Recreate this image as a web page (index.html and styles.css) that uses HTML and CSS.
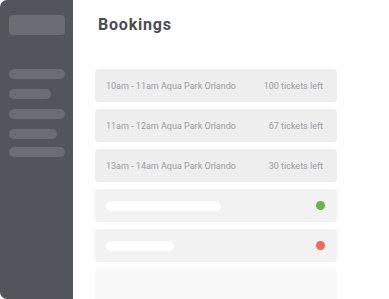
FILE: index.html
```html
<!DOCTYPE html>
<html>
<head>
<meta charset="utf-8">
<link rel="stylesheet" href="styles.css">
</head>
<body>
<div class="app">
  <aside class="sidebar">
    <div class="logo"></div>
    <div class="nav">
      <div class="nav-line w56"></div>
      <div class="nav-line w42"></div>
      <div class="nav-line w56"></div>
      <div class="nav-line w48"></div>
      <div class="nav-line w56 last"></div>
    </div>
  </aside>
  <main class="main">
    <h1 class="title">Bookings</h1>
    <div class="list">
      <div class="row"><span>10am - 11am Aqua Park Orlando</span><span>100 tickets left</span></div>
      <div class="row"><span>11am - 12am Aqua Park Orlando</span><span>67 tickets left</span></div>
      <div class="row"><span>13am - 14am Aqua Park Orlando</span><span>30 tickets left</span></div>
      <div class="row light"><div class="pill p-long"></div><div class="dot green"></div></div>
      <div class="row light"><div class="pill p-short"></div><div class="dot red"></div></div>
      <div class="row lighter"></div>
    </div>
  </main>
</div>
</body>
</html>
```
FILE: styles.css
```css
html, body {
  margin: 0;
  padding: 0;
  background: #ffffff;
  font-family: Roboto, "Liberation Sans", sans-serif;
}
.app {
  display: flex;
  width: 389px;
  height: 299px;
  overflow: hidden;
}
.sidebar {
  width: 73px;
  height: 299px;
  background: #54555c;
  border-radius: 7px 0 0 7px;
  padding: 15px 8px 0 9px;
  box-sizing: border-box;
  flex-shrink: 0;
}
.logo {
  width: 56px;
  height: 20px;
  background: #6b6c76;
  border-radius: 4px;
}
.nav {
  margin-top: 34px;
  display: flex;
  flex-direction: column;
  gap: 10px;
}
.nav-line {
  height: 10px;
  background: #6b6c76;
  border-radius: 5px;
}
.nav-line.last { margin-top: -2px; }
.w56 { width: 56px; }
.w42 { width: 42px; }
.w48 { width: 48px; }
.main {
  flex: 1;
  padding-left: 22px;
}
.title {
  margin: 15px 0 0 3px;
  font-size: 16px;
  line-height: 20px;
  font-weight: 700;
  letter-spacing: 0.8px;
  color: #4b4b53;
}
.list {
  margin-top: 34px;
  width: 242px;
  display: flex;
  flex-direction: column;
  gap: 7px;
}
.row {
  height: 33px;
  border-radius: 4px;
  background: #eeeeee;
  display: flex;
  align-items: center;
  justify-content: space-between;
  padding: 0 14px 0 11px;
  box-sizing: border-box;
  font-size: 9px;
  color: #9a9aa4;
}
.row.light { background: #f2f2f2; }
.row.lighter { background: #f8f8f8; }
.pill {
  height: 10px;
  background: #ffffff;
  border-radius: 5px;
}
.p-long { width: 115px; }
.p-short { width: 68px; }
.dot {
  width: 9px;
  height: 9px;
  border-radius: 50%;
  margin-right: -2px;
}
.green { background: #69b44a; }
.red { background: #f2675a; }
```
